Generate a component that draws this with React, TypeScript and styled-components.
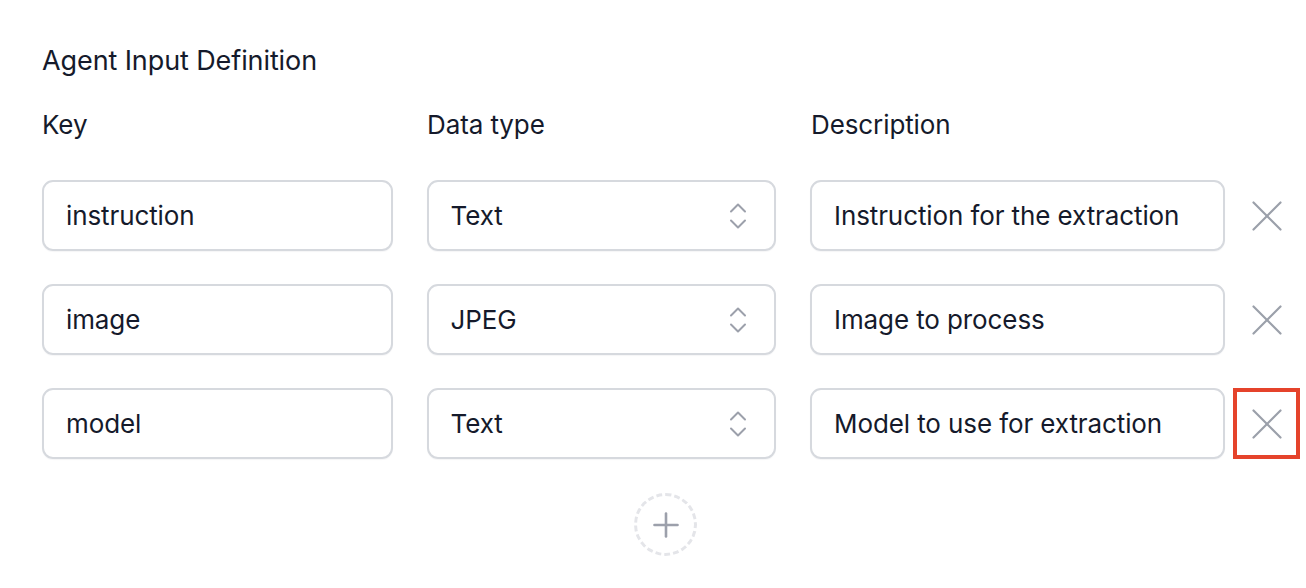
import React from "react"
import styled, { createGlobalStyle } from "styled-components"

const GlobalStyle = createGlobalStyle`
  body {
    margin: 0;
    background: #ffffff;
    font-family: Inter, "Liberation Sans", sans-serif;
    color: #151a2b;
  }
`

const Section = styled.section`
  padding: 44px 0 0 42px;
  width: 1258px;
`

const Title = styled.h2`
  margin: 0;
  font-size: 27px;
  line-height: 34px;
  font-weight: 400;
  letter-spacing: -0.1px;
`

const HeaderRow = styled.div`
  display: flex;
  gap: 34px;
  margin-top: 30px;
  margin-bottom: 38px;
`

const Label = styled.div<{ $width: number }>`
  width: ${(p) => p.$width}px;
  font-size: 26px;
  line-height: 34px;
  letter-spacing: -0.1px;
`

const Rows = styled.div`
  display: flex;
  flex-direction: column;
  gap: 33px;
`

const Row = styled.div`
  display: flex;
  gap: 34px;
`

const DescCell = styled.div`
  display: flex;
  gap: 8px;
`

const Field = styled.div<{ $width: number }>`
  box-sizing: border-box;
  width: ${(p) => p.$width}px;
  height: 71px;
  border: 2px solid #d6d9de;
  border-radius: 11px;
  padding: 0 27px 0 22px;
  display: flex;
  align-items: center;
  justify-content: space-between;
  font-size: 26px;
  letter-spacing: -0.1px;
  box-shadow: 0 1px 1px rgba(16, 24, 40, 0.04);
`

const RemoveButton = styled.button<{ $highlight?: boolean }>`
  box-sizing: border-box;
  width: 67px;
  height: 71px;
  padding: 0;
  background: none;
  border: 4px solid ${(p) => (p.$highlight ? "#e5432b" : "transparent")};
  display: flex;
  align-items: center;
  justify-content: center;
  cursor: pointer;
`

const AddRow = styled.div`
  display: flex;
  justify-content: center;
  padding-right: 11px;
  margin-top: 34px;
`

const AddButton = styled.button`
  box-sizing: border-box;
  width: 63px;
  height: 63px;
  border-radius: 50%;
  border: 3px dashed #e4e5e9;
  background: none;
  display: flex;
  align-items: center;
  justify-content: center;
  padding: 0;
  cursor: pointer;
`

const Chevrons = () => (
  <svg width="18" height="28" viewBox="0 0 18 28" fill="none" stroke="#9ca0ab" strokeWidth="2" strokeLinecap="round" strokeLinejoin="round">
    <polyline points="2,9.5 9,2.5 16,9.5" />
    <polyline points="2,18.5 9,25.5 16,18.5" />
  </svg>
)

const CloseIcon = () => (
  <svg width="30" height="30" viewBox="0 0 30 30" fill="none" stroke="#9ba0aa" strokeWidth="2.2" strokeLinecap="round">
    <line x1="1.5" y1="1.5" x2="28.5" y2="28.5" />
    <line x1="28.5" y1="1.5" x2="1.5" y2="28.5" />
  </svg>
)

const PlusIcon = () => (
  <svg width="26" height="26" viewBox="0 0 26 26" fill="none" stroke="#9ca0ab" strokeWidth="2.6" strokeLinecap="round">
    <line x1="13" y1="1.5" x2="13" y2="24.5" />
    <line x1="1.5" y1="13" x2="24.5" y2="13" />
  </svg>
)

const inputs = [
  { key: "instruction", type: "Text", description: "Instruction for the extraction" },
  { key: "image", type: "JPEG", description: "Image to process" },
  { key: "model", type: "Text", description: "Model to use for extraction" },
]

export default function App() {
  return (
    <>
      <GlobalStyle />
      <Section>
        <Title>Agent Input Definition</Title>
        <HeaderRow>
          <Label $width={351}>Key</Label>
          <Label $width={350}>Data type</Label>
          <Label $width={415}>Description</Label>
        </HeaderRow>
        <Rows>
          {inputs.map((input, i) => (
            <Row key={input.key}>
              <Field $width={351}>{input.key}</Field>
              <Field $width={350}>
                {input.type}
                <Chevrons />
              </Field>
              <DescCell>
                <Field $width={415}>{input.description}</Field>
                <RemoveButton $highlight={i === inputs.length - 1} aria-label="Remove">
                  <CloseIcon />
                </RemoveButton>
              </DescCell>
            </Row>
          ))}
        </Rows>
        <AddRow>
          <AddButton aria-label="Add input">
            <PlusIcon />
          </AddButton>
        </AddRow>
      </Section>
    </>
  )
}
